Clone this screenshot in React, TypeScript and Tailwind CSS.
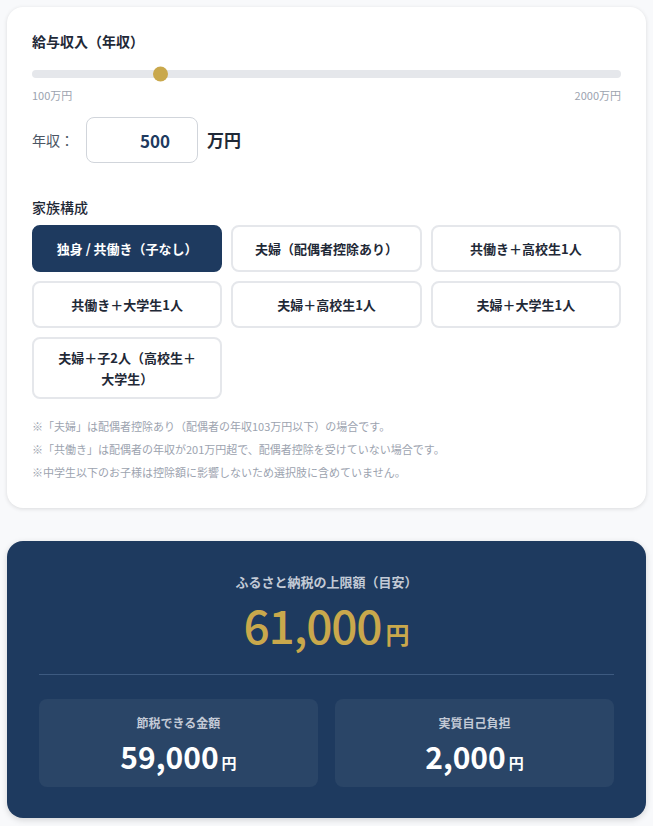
import { useState } from "react";

const FAMILY_OPTIONS = [
  "独身 / 共働き（子なし）",
  "夫婦（配偶者控除あり）",
  "共働き＋高校生1人",
  "共働き＋大学生1人",
  "夫婦＋高校生1人",
  "夫婦＋大学生1人",
  "夫婦＋子2人（高校生＋\n大学生）",
];

const MIN_INCOME = 100;
const MAX_INCOME = 2000;

export default function App() {
  const [income, setIncome] = useState<number>(500);
  const [family, setFamily] = useState<number>(0);

  const pct = (income - MIN_INCOME) / (MAX_INCOME - MIN_INCOME);

  return (
    <div
      className="min-h-[826px] bg-[#f8f9fb] px-[7px] pt-[7px] pb-[7px] text-[#1f2937]"
      style={{ fontFamily: '"Noto Sans CJK JP", "Noto Sans", sans-serif' }}
    >
      {/* input card */}
      <div className="rounded-2xl bg-white px-[25px] pt-[24px] pb-[27px] shadow-[0_1px_4px_rgba(0,0,0,0.12)]">
        <p className="text-[14px] font-bold leading-5 text-[#1f2937]">給与収入（年収）</p>

        <div className="relative mt-[19px] h-[8px] rounded-full bg-[#e5e7eb]">
          <div
            className="absolute top-1/2 h-[15px] w-[15px] -translate-y-1/2 rounded-full bg-[#c9a84c]"
            style={{ left: `calc(${pct} * (100% - 15px))` }}
          />
        </div>
        <div className="mt-[9px] flex justify-between text-[11px] leading-4 text-[#9ca3af]">
          <span>100万円</span>
          <span>2000万円</span>
        </div>

        <div className="mt-[14px] flex items-center">
          <span className="w-[54px] text-[14px] text-[#4b5563]">年収：</span>
          <input
            value={income}
            onChange={(e) => setIncome(Number(e.target.value) || 0)}
            className="h-[46px] w-[112px] rounded-lg border border-[#d1d5db] bg-white pr-[27px] text-right text-[17px] font-semibold text-[#1e3a5f] outline-none"
          />
          <span className="ml-[9px] text-[17px] font-bold text-[#1f2937]">万円</span>
        </div>

        <p className="mt-[34px] text-[14px] font-medium leading-5 text-[#1f2937]">家族構成</p>
        <div className="mt-[8px] grid grid-cols-3 gap-[9px]">
          {FAMILY_OPTIONS.map((label, i) => (
            <button
              key={label}
              onClick={() => setFamily(i)}
              className={
                family === i
                  ? "min-h-[47px] whitespace-pre-line rounded-lg border-2 border-[#1e3a5f] bg-[#1e3a5f] px-4 py-2 text-[13px] font-bold leading-[21px] text-white"
                  : "min-h-[47px] whitespace-pre-line rounded-lg border-2 border-[#e5e7eb] bg-white px-4 py-2 text-[13px] font-bold leading-[21px] text-[#1f2937]"
              }
            >
              {label}
            </button>
          ))}
        </div>

        <div className="mt-[18px] space-y-[5px] text-[11px] leading-[18px] text-[#9ca3af]">
          <p>※「夫婦」は配偶者控除あり（配偶者の年収103万円以下）の場合です。</p>
          <p>※「共働き」は配偶者の年収が201万円超で、配偶者控除を受けていない場合です。</p>
          <p>※中学生以下のお子様は控除額に影響しないため選択肢に含めていません。</p>
        </div>
      </div>

      {/* result card */}
      <div className="mt-[33px] rounded-2xl bg-[#1e3a5f] px-[32px] pt-[31px] pb-[31px] shadow-[0_2px_6px_rgba(0,0,0,0.15)]">
        <p className="text-center text-[13px] font-bold leading-5 text-[#c3cad6]">ふるさと納税の上限額（目安）</p>
        <div className="mt-[6px] flex items-baseline justify-center text-[#c9a84c]">
          <span className="text-[46px] font-medium leading-[52px] tracking-tight">61,000</span>
          <span className="ml-[4px] text-[24px] font-bold">円</span>
        </div>

        <div className="mt-[22px] h-px bg-[#3d5a80]" />

        <div className="mt-[24px] grid grid-cols-2 gap-[17px]">
          <div className="rounded-lg bg-[#2a4567] px-4 pt-[16px] pb-[12px] text-center">
            <p className="text-[12px] font-bold leading-4 text-[#c3cad6]">節税できる金額</p>
            <p className="mt-[7px] flex items-baseline justify-center text-white">
              <span className="text-[30px] font-semibold leading-9">59,000</span>
              <span className="ml-[3px] text-[15px] font-bold">円</span>
            </p>
          </div>
          <div className="rounded-lg bg-[#2a4567] px-4 pt-[16px] pb-[12px] text-center">
            <p className="text-[12px] font-bold leading-4 text-[#c3cad6]">実質自己負担</p>
            <p className="mt-[7px] flex items-baseline justify-center text-white">
              <span className="text-[30px] font-semibold leading-9">2,000</span>
              <span className="ml-[3px] text-[15px] font-bold">円</span>
            </p>
          </div>
        </div>
      </div>
    </div>
  );
}
